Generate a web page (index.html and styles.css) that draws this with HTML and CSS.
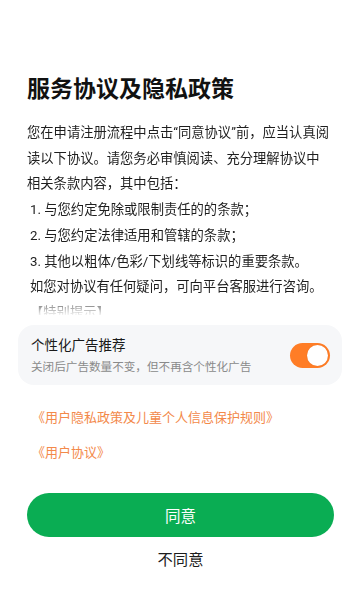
FILE: index.html
```html
<!DOCTYPE html>
<html lang="zh-CN">
<head>
<meta charset="utf-8">
<meta name="viewport" content="width=device-width, initial-scale=1">
<link rel="stylesheet" href="styles.css">
<title>服务协议及隐私政策</title>
</head>
<body>
<div class="page">
  <h1 class="title">服务协议及隐私政策</h1>
  <div class="scroll">
    <p class="para">您在申请注册流程中点击“同意协议”前，应当认真阅读以下协议。请您务必审慎阅读、充分理解协议中相关条款内容，其中包括：</p>
    <p class="item">1. 与您约定免除或限制责任的的条款；</p>
    <p class="item">2. 与您约定法律适用和管辖的条款；</p>
    <p class="item">3. 其他以粗体/色彩/下划线等标识的重要条款。</p>
    <p class="item">如您对协议有任何疑问，可向平台客服进行咨询。</p>
    <p class="item">【特别提示】</p>
  </div>
  <div class="card">
    <div class="card-text">
      <div class="card-title">个性化广告推荐</div>
      <div class="card-sub">关闭后广告数量不变，但不再含个性化广告</div>
    </div>
    <div class="toggle"><span class="knob"></span></div>
  </div>
  <div class="links">
    <a class="link">《用户隐私政策及儿童个人信息保护规则》</a>
    <a class="link">《用户协议》</a>
  </div>
  <div class="actions">
    <button class="btn-agree">同意</button>
    <button class="btn-disagree">不同意</button>
  </div>
</div>
</body>
</html>
```
FILE: styles.css
```css
* { box-sizing: border-box; }
html, body { margin: 0; padding: 0; background: #fff; }
body {
  font-family: "Roboto", "Noto Sans CJK SC", sans-serif;
  color: #1c1c1c;
  width: 360px;
  height: 600px;
  overflow: hidden;
}
.page {
  padding: 75px 18px 0 18px;
  display: flex;
  flex-direction: column;
}
.title {
  margin: 0;
  padding: 0 9px;
  font-size: 23px;
  line-height: 30px;
  font-weight: 700;
  color: #111;
}
.scroll {
  margin-top: 15px;
  height: 195px;
  overflow: hidden;
  padding: 0 12px 0 9px;
  -webkit-mask-image: linear-gradient(to bottom, #000 calc(100% - 20px), rgba(0,0,0,0.06) 100%);
  mask-image: linear-gradient(to bottom, #000 calc(100% - 20px), rgba(0,0,0,0.06) 100%);
}
.para, .item {
  margin: 0;
  font-size: 13.3px;
  line-height: 25.7px;
  color: #1e1e1e;
}
.item { padding-left: 3px; }
.card {
  margin-top: 10px;
  background: #f6f7f9;
  border-radius: 16px;
  padding: 10px 12px 9px 13px;
  display: flex;
  align-items: center;
  justify-content: space-between;
}
.card-title {
  font-size: 13.5px;
  line-height: 20px;
  color: #1a1a1a;
}
.card-sub {
  margin-top: 3px;
  font-size: 11.6px;
  line-height: 18px;
  color: #8a8a8a;
}
.toggle {
  width: 40px;
  height: 25px;
  border-radius: 13px;
  background: #ff7d26;
  display: flex;
  align-items: center;
  justify-content: flex-end;
  padding-right: 2px;
}
.knob {
  width: 21px;
  height: 21px;
  border-radius: 50%;
  background: #fff;
  box-shadow: 0 0 1px rgba(200,90,20,0.6);
}
.links {
  margin-top: 23px;
  padding-left: 14px;
  display: flex;
  flex-direction: column;
  gap: 15px;
}
.link {
  font-size: 13px;
  line-height: 20px;
  color: #f3894a;
}
.actions {
  margin-top: 30px;
  padding: 0 8px 0 9px;
  display: flex;
  flex-direction: column;
  align-items: stretch;
}
.btn-agree {
  height: 44px;
  border: 0;
  border-radius: 22px;
  background: #0aad53;
  color: #fff;
  font-family: inherit;
  font-size: 15.5px;
  padding: 0;
}
.btn-disagree {
  margin-top: 12px;
  height: 22px;
  border: 0;
  background: transparent;
  color: #1c1c1c;
  font-family: inherit;
  font-size: 15.3px;
  line-height: 22px;
  padding: 0;
}
```
